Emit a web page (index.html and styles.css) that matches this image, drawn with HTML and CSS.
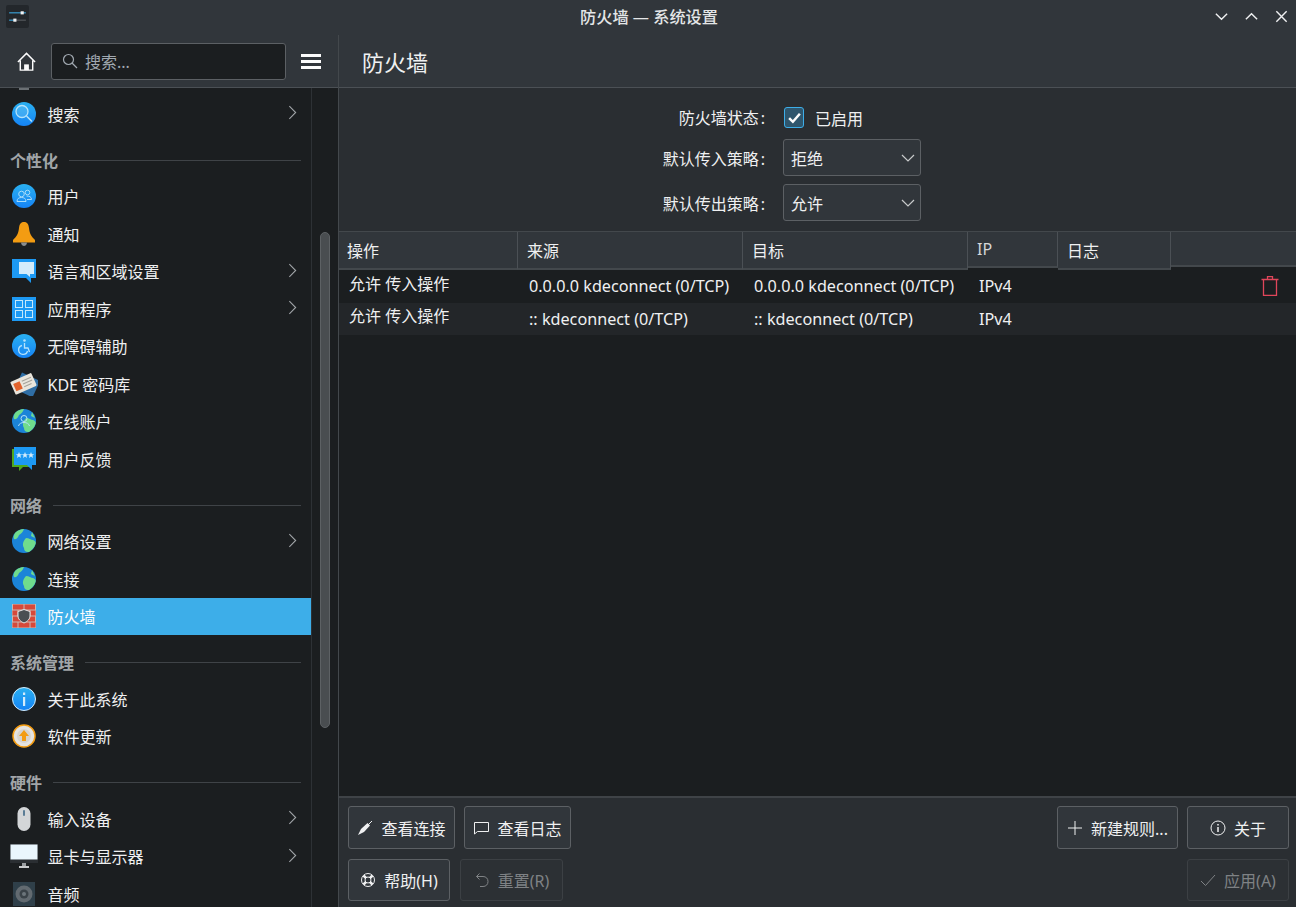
FILE: index.html
```html
<!DOCTYPE html>
<html lang="zh-CN">
<head>
  <meta charset="UTF-8">
  <title>防火墙 — 系统设置</title>
  <link rel="stylesheet" href="styles.css">
</head>

<body>
  <!-- Title bar -->
  <header class="titlebar">
    <svg class="app-icon" viewBox="0 0 22 22">
      <rect width="22" height="22" rx="2" fill="#23272b"/>
      <path d="M3 7.500H19" stroke="#3daee9"/>
      <path d="M3 14.500H8" stroke="#3daee9"/>
      <path d="M8 14.500H19" stroke="#5a5f64"/>
      <rect x="14" y="6" width="3" height="3" fill="#eff0f1"/>
      <rect x="7" y="13" width="3" height="3" fill="#eff0f1"/>
    </svg>
    <div class="window-title">防火墙 — 系统设置</div>
    <div class="window-buttons">
      <svg viewBox="0 0 16 16"><path d="M2 5L8 11L14 5"/></svg>
      <svg viewBox="0 0 16 16"><path d="M2 11L8 5L14 11"/></svg>
      <svg viewBox="0 0 16 16"><path d="M2.500 2.500L13.500 13.500M13.500 2.500L2.500 13.500"/></svg>
    </div>
  </header>

  <div class="main">
    <!-- Sidebar -->
    <aside class="sidebar">
      <div class="side-head">
        <svg class="home" viewBox="0 0 22 22">
          <path d="M2 11.500L11 2.500L20 11.500M4.500 10V20H17.500V10" fill="none" stroke="#fcfcfc" stroke-width="1.500"/>
          <rect x="8.500" y="14" width="5" height="6" fill="#fcfcfc"/>
        </svg>
        <div class="search">
          <svg viewBox="0 0 16 16"><circle cx="6.500" cy="6.500" r="5"/><path d="M10 10L15 15"/></svg>
          <span>搜索...</span>
        </div>
        <div class="burger"><i></i><i></i><i></i></div>
      </div>

      <div class="side-body">
        <nav class="list">
          <div class="cut-icon"></div>

          <div class="item">
            <svg class="icon" viewBox="0 0 24 24"><defs><linearGradient id="blue" x1="0" y1="0" x2="0" y2="1"><stop offset="0" stop-color="#2ab0f0"/><stop offset="1" stop-color="#1583f5"/></linearGradient></defs><circle cx="12" cy="12" r="12" fill="url(#blue)"/><circle cx="10" cy="9.500" r="6" fill="#7cc8f5" fill-opacity="0.35" stroke="#b5e3fb" stroke-width="1.300"/><path d="M14.500 14L20 19.500" stroke="#b5e3fb" stroke-width="1.500"/></svg>
            <span>搜索</span><svg class="chev" viewBox="0 0 10 16"><path d="M1.500 1L8.500 8L1.500 15"/></svg>
          </div>

          <div class="section"><span>个性化</span><hr></div>
          <div class="item">
            <svg class="icon" viewBox="0 0 24 24"><circle cx="12" cy="12" r="12" fill="url(#blue)"/><g fill="none" stroke="#a9dcf9"><circle cx="9.500" cy="10" r="2.800"/><circle cx="15.500" cy="8.500" r="2.300"/><path d="M5 17.500C5 14.500 7 13.500 9.500 13.500S14 14.500 14 17.500ZM14.500 12C17 12 19.500 12.500 19.500 15.500H15"/></g></svg>
            <span>用户</span>
          </div>
          <div class="item">
            <svg class="icon" viewBox="0 0 24 24"><path d="M12 0C15.500 0 16.500 2.500 17 6C17.500 12 20 15 23 18V20.500H1V18C4 15 6.500 12 7 6C7.500 2.500 8.500 0 12 0Z" fill="#f39c12"/><path d="M9 20.500H15C15 23 13 24 12 24S9 23 9 20.500Z" fill="#8a8d8f"/></svg>
            <span>通知</span>
          </div>
          <div class="item">
            <svg class="icon" viewBox="0 0 24 24"><path d="M0 0H24V19H19V24L14 19H0Z" fill="#1d99f3"/><path d="M7 3H22V15H18V18L14.500 15H7Z" fill="#d4ecfb"/></svg>
            <span>语言和区域设置</span><svg class="chev" viewBox="0 0 10 16"><path d="M1.500 1L8.500 8L1.500 15"/></svg>
          </div>
          <div class="item">
            <svg class="icon" viewBox="0 0 24 24"><rect width="24" height="24" fill="#1d99f3"/><g fill="none" stroke="#c5e8fb"><rect x="3.500" y="3.500" width="7" height="7"/><rect x="13.500" y="3.500" width="7" height="7"/><rect x="3.500" y="13.500" width="7" height="7"/><rect x="13.500" y="13.500" width="7" height="7"/></g></svg>
            <span>应用程序</span><svg class="chev" viewBox="0 0 10 16"><path d="M1.500 1L8.500 8L1.500 15"/></svg>
          </div>
          <div class="item">
            <svg class="icon" viewBox="0 0 24 24"><circle cx="12" cy="12" r="12" fill="url(#blue)"/><circle cx="12.500" cy="6.500" r="1.300" fill="#b5e3fb"/><path d="M12.500 9V14H16L17.500 18M10 11.500A4.500 4.500 0 1 0 15.500 17" fill="none" stroke="#b5e3fb" stroke-width="1.300"/></svg>
            <span>无障碍辅助</span>
          </div>
          <div class="item">
            <svg class="icon wide" viewBox="0 0 28 24"><g transform="rotate(25 15 13)"><rect x="7" y="3" width="20" height="18" fill="#2f6ea5"/></g><g transform="rotate(-24 13 12)"><rect x="2" y="5" width="23" height="14" rx="1" fill="#e9e5dc"/><rect x="4" y="8" width="7" height="8" fill="#e2632c"/><path d="M13 9H23M13 12H23M13 15H21" stroke="#a5a299"/></g></svg>
            <span>KDE 密码库</span>
          </div>
          <div class="item">
            <svg class="icon" viewBox="0 0 24 24"><use href="#globe-shape"/><circle cx="12" cy="9.500" r="3" fill="none" stroke="#b5e3fb"/><path d="M6.500 17C7 14.500 9.500 13.500 12 13.500S17 14.500 17.500 17" fill="none" stroke="#b5e3fb"/></svg>
            <span>在线账户</span>
          </div>
          <div class="item">
            <svg class="icon" viewBox="0 0 24 24"><path d="M0 2H20V20H11L7 24V20H0Z" fill="#4fa81d"/><path d="M2 0H24V18H20V23L15 18H2Z" fill="#1d99f3"/><g fill="#d4ecfb"><path id="star" d="M7 5L7.900 7.200H10.200L8.400 8.600L9 11L7 9.600L5 11L5.600 8.600L3.800 7.200H6.100Z"/><use href="#star" x="6"/><use href="#star" x="12"/></g></svg>
            <span>用户反馈</span>
          </div>

          <div class="section"><span>网络</span><hr></div>
          <div class="item">
            <svg class="icon" viewBox="0 0 24 24"><use href="#globe-shape"/></svg>
            <span>网络设置</span><svg class="chev" viewBox="0 0 10 16"><path d="M1.500 1L8.500 8L1.500 15"/></svg>
          </div>
          <div class="item">
            <svg class="icon" viewBox="0 0 24 24"><g id="globe-shape"><circle cx="12" cy="12" r="12" fill="#1b84d8"/><path d="M3 4C6 1 9 0 12 0C11 3 9 5 7 6C6 8 5 11 2 10C1 8 2 6 3 4ZM14 9C17 9 19 11 21 11C24 12 24 14 23.500 15C22 19 20 21 17 23C14 23.500 12 22 12 19C10 16 11 12 14 9ZM20 3L23 9L19 7Z" fill="#6fdc8c"/></g></svg>
            <span>连接</span>
          </div>
          <div class="item active">
            <svg class="icon" viewBox="0 0 24 24"><rect width="24" height="24" fill="#c9b8b2"/><g fill="#d6493a"><rect x="1" y="0.500" width="10.500" height="5"/><rect x="12.500" y="0.500" width="10.500" height="5"/><rect x="0.500" y="6.500" width="5" height="5"/><rect x="6.500" y="6.500" width="11" height="5"/><rect x="18.500" y="6.500" width="5" height="5"/><rect x="1" y="12.500" width="10.500" height="5"/><rect x="12.500" y="12.500" width="10.500" height="5"/><rect x="0.500" y="18.500" width="5" height="5"/><rect x="6.500" y="18.500" width="11" height="5"/><rect x="18.500" y="18.500" width="5" height="5"/></g><path d="M12 5.500L18 7.500V12C18 15 15.500 17.500 12 19C8.500 17.500 6 15 6 12V7.500Z" fill="#4a4e52" stroke="#e4e6e7"/></svg>
            <span>防火墙</span>
          </div>

          <div class="section"><span>系统管理</span><hr></div>
          <div class="item">
            <svg class="icon" viewBox="0 0 24 24"><circle cx="12" cy="12" r="11.500" fill="url(#blue)" stroke="#d4ecfb"/><rect x="11" y="10" width="2.200" height="9" fill="#d4ecfb"/><rect x="11" y="5.500" width="2.200" height="2.500" fill="#d4ecfb"/></svg>
            <span>关于此系统</span>
          </div>
          <div class="item">
            <svg class="icon" viewBox="0 0 24 24"><circle cx="12" cy="12" r="11" fill="#e5e3df" stroke="#f39c12" stroke-width="1.500"/><circle cx="12" cy="12" r="7" fill="#d7d4cf"/><path d="M12 6L17 12H14V17H10V12H7Z" fill="#f39c12"/></svg>
            <span>软件更新</span>
          </div>

          <div class="section"><span>硬件</span><hr></div>
          <div class="item">
            <svg class="icon" viewBox="0 0 24 24"><rect x="5.500" y="0" width="13" height="24" rx="6.500" fill="#d3d6d8"/><rect x="11" y="3" width="2" height="6" rx="1" fill="#5a7d96"/></svg>
            <span>输入设备</span><svg class="chev" viewBox="0 0 10 16"><path d="M1.500 1L8.500 8L1.500 15"/></svg>
          </div>
          <div class="item">
            <svg class="icon wide" viewBox="0 0 28 24"><rect width="28" height="19" fill="#2a2e32"/><rect x="0.500" y="0.500" width="27" height="15" fill="#eaf6fd"/><rect x="12" y="19" width="4" height="3" fill="#9a9da0"/><rect x="9" y="22" width="10" height="2" fill="#c9cbcd"/></svg>
            <span>显卡与显示器</span><svg class="chev" viewBox="0 0 10 16"><path d="M1.500 1L8.500 8L1.500 15"/></svg>
          </div>
          <div class="item">
            <svg class="icon" viewBox="0 0 24 24"><rect x="1" width="22" height="24" fill="#2f3f49"/><circle cx="12" cy="12" r="8.500" fill="#626a70"/><circle cx="12" cy="12" r="4.500" fill="#3a4248"/><circle cx="12" cy="12" r="2" fill="#6c757b"/></svg>
            <span>音频</span>
          </div>
        </nav>

        <div class="scrollbar"><div class="thumb"></div></div>
      </div>
    </aside>

    <!-- Firewall page -->
    <section class="page">
      <div class="page-head">防火墙</div>

      <div class="form">
        <label class="top">防火墙状态<b>:</b></label>
        <div class="check-row">
          <span class="checkbox"><svg viewBox="0 0 14 14"><path d="M2 7.500L5.500 11L12 3.500"/></svg></span>
          <span>已启用</span>
        </div>
        <label>默认传入策略<b>:</b></label>
        <div class="combo"><span>拒绝</span><svg viewBox="0 0 14 8"><path d="M1 1L7 7L13 1"/></svg></div>
        <label>默认传出策略<b>:</b></label>
        <div class="combo"><span>允许</span><svg viewBox="0 0 14 8"><path d="M1 1L7 7L13 1"/></svg></div>
      </div>

      <div class="table">
        <div class="thead">
          <div class="th c1">操作</div>
          <div class="th c2">来源</div>
          <div class="th c3">目标</div>
          <div class="th c4 short">IP</div>
          <div class="th c5">日志</div>
          <div class="th c6 shorter"></div>
        </div>
        <div class="row">
          <div class="c1 action">允许 传入操作</div>
          <div class="c2">0.0.0.0 kdeconnect (0/TCP)</div>
          <div class="c3">0.0.0.0 kdeconnect (0/TCP)</div>
          <div class="c4">IPv4</div>
          <div class="c5"></div>
          <div class="c6 trash-cell">
            <svg class="trash" viewBox="0 0 18 20"><path d="M0.500 3.500H17.500M6.500 3.500V0.500H11.500V3.500M2.500 3.500V19.500H15.500V3.500" fill="none" stroke="#e0465a" stroke-width="1.300"/></svg>
          </div>
        </div>
        <div class="row alt">
          <div class="c1 action">允许 传入操作</div>
          <div class="c2">:: kdeconnect (0/TCP)</div>
          <div class="c3">:: kdeconnect (0/TCP)</div>
          <div class="c4">IPv4</div>
          <div class="c5"></div>
          <div class="c6"></div>
        </div>
      </div>

      <div class="footer">
        <div class="btn-row">
          <div class="btn w107">
            <svg viewBox="0 0 16 16"><path d="M1 15L4 9L10.500 3L13 5.500L7 12Z" fill="#eff0f1"/><path d="M11 5L15 1" stroke="#eff0f1"/></svg>
            查看连接
          </div>
          <div class="btn w107">
            <svg viewBox="0 0 16 16"><path d="M1.500 2.500H15.500V11.500H4.500L1.500 14Z" fill="none" stroke="#eff0f1"/></svg>
            查看日志
          </div>
          <div class="spacer"></div>
          <div class="btn w121">
            <svg viewBox="0 0 16 16"><path d="M8 1V15M1 8H15" stroke="#eff0f1"/></svg>
            新建规则...
          </div>
          <div class="btn w102">
            <svg viewBox="0 0 16 16"><circle cx="8" cy="8" r="7" fill="none" stroke="#eff0f1"/><path d="M8 7V12M8 4V5.500" stroke="#eff0f1" stroke-width="1.500"/></svg>
            关于
          </div>
        </div>
        <div class="btn-row">
          <div class="btn w102 help">
            <svg viewBox="0 0 16 16"><g fill="none" stroke="#eff0f1"><circle cx="8" cy="8" r="6.500"/><circle cx="8" cy="8" r="3"/><path d="M3.500 3.500L6 6M12.500 3.500L10 6M3.500 12.500L6 10M12.500 12.500L10 10" stroke-width="2.500"/></g></svg>
            <span>帮助(H)</span>
          </div>
          <div class="btn off w103">
            <svg viewBox="0 0 16 16"><path d="M5.500 1.500L2.500 4.500L5.500 7.500M2.500 4.500H9C12 4.500 14 6.500 14 9.500S12 14.500 9 14.500H6" fill="none" stroke="#7f8285"/></svg>
            <span>重置(R)</span>
          </div>
          <div class="spacer"></div>
          <div class="btn off w102">
            <svg viewBox="0 0 16 16"><path d="M1 9L5.500 13.500L15 3" fill="none" stroke="#7f8285"/></svg>
            <span>应用(A)</span>
          </div>
        </div>
      </div>
    </section>
  </div>
</body>
</html>
```

FILE: styles.css
```css
/* Basic reset */
* {
  margin: 0;
  padding: 0;
  box-sizing: border-box;
}

body {
  width: 1296px;
  height: 907px;
  overflow: hidden;
  display: flex;
  flex-direction: column;
  font-family: "Noto Sans", "Noto Sans CJK SC", sans-serif;
  font-size: 16px;
  color: #eff0f1;
  background-color: #2a2e32;
}

/* Title bar */
.titlebar {
  height: 35px;
  flex-shrink: 0;
  display: grid;
  grid-template-columns: 1fr auto 1fr;
  align-items: center;
  padding: 0 7px 3px 6px;
  background-color: #31363b;
}

.app-icon {
  width: 23px;
  height: 23px;
}

.window-title {
  margin-left: 3px;
  font-size: 16.200px;
  font-weight: 500;
  color: #e4e6e7;
}

.window-buttons {
  display: flex;
  justify-content: flex-end;
  gap: 15px;
}

.window-buttons svg {
  width: 15px;
  height: 15px;
  fill: none;
  stroke: #eff0f1;
  stroke-width: 1.500;
}

.main {
  flex: 1;
  display: flex;
  min-height: 0;
}

/* Sidebar */
.sidebar {
  width: 339px;
  flex-shrink: 0;
  display: flex;
  flex-direction: column;
  border-right: 1px solid #43484c;
  background-color: #1b1e20;
}

.side-head {
  height: 53px;
  flex-shrink: 0;
  display: flex;
  align-items: center;
  gap: 14px;
  padding: 0 16px;
  background-color: #31363b;
  border-bottom: 1px solid #4b5055;
}

.home {
  width: 21px;
  height: 21px;
}

.search {
  width: 235px;
  height: 37px;
  display: flex;
  align-items: center;
  gap: 7px;
  padding-left: 10px;
  background-color: #1b1e20;
  border: 1px solid #5c6064;
  border-radius: 3px;
  color: #a1a9b1;
}

.search svg {
  width: 16px;
  height: 16px;
  fill: none;
  stroke: #a1a9b1;
  stroke-width: 1.200;
}

.burger {
  width: 20px;
  margin-left: 1px;
  display: flex;
  flex-direction: column;
  gap: 3px;
}

.burger i {
  display: block;
  height: 3px;
  background-color: #fcfcfc;
}

.side-body {
  flex: 1;
  display: flex;
  min-height: 0;
  overflow: hidden;
}

.list {
  width: 311px;
  flex-shrink: 0;
  padding-top: 7px;
  position: relative;
}

/* bit of the item scrolled away above the list */
.cut-icon {
  position: absolute;
  top: 0;
  left: 19px;
  width: 10px;
  height: 2px;
  background-color: #6b7074;
}

.item {
  height: 37.500px;
  display: flex;
  align-items: center;
  padding: 0 14px 0 12px;
  color: #eff0f1;
}

.item span {
  flex: 1;
  margin-left: 11.500px;
}

.item.active {
  background-color: #3daee9;
  color: #fcfcfc;
}

.icon {
  width: 24px;
  height: 24px;
  flex-shrink: 0;
}

.icon.wide {
  width: 28px;
  margin: 0 -2px;
}

.chev {
  width: 9px;
  height: 15px;
  margin-bottom: 2px;
  flex-shrink: 0;
  fill: none;
  stroke: #a1a5a8;
  stroke-width: 1.200;
}

.section {
  height: 45px;
  display: flex;
  align-items: flex-end;
  gap: 10.500px;
  padding: 0 10px 6px 10px;
  font-weight: 700;
  color: #a1a5a8;
}

.section span {
  line-height: 22px;
}

.section hr {
  flex: 1;
  border: none;
  height: 1px;
  margin-bottom: 11px;
  background-color: #3f4347;
}

.scrollbar {
  flex: 1;
  border-left: 1px solid #2d3135;
  padding: 144px 0 0 8px;
}

.thumb {
  width: 10px;
  height: 496px;
  border-radius: 5px;
  background-color: #494d50;
  border: 1px solid #5d6164;
}

/* Firewall page */
.page {
  flex: 1;
  display: flex;
  flex-direction: column;
  min-width: 0;
}

.page-head {
  height: 53px;
  flex-shrink: 0;
  display: flex;
  align-items: center;
  padding-left: 23px;
  font-size: 22px;
  background-color: #31363b;
  border-bottom: 1px solid #4b5055;
}

.form {
  height: 143px;
  flex-shrink: 0;
  display: grid;
  grid-template-columns: 429px 1fr;
  grid-template-rows: 24px 37px 37px;
  row-gap: 8px;
  column-gap: 15px;
  align-items: center;
  align-content: start;
  padding-top: 19px;
}

.form > label {
  text-align: right;
  padding-right: 1px;
}

.form > label b {
  font-weight: 400;
  margin: 0 2px;
}

.form > label.top {
  align-self: start;
  line-height: 22px;
}

.check-row {
  align-self: start;
  height: 21px;
  display: flex;
  align-items: center;
  gap: 11px;
  padding-left: 1px;
}

.checkbox {
  width: 20px;
  height: 21px;
  display: flex;
  align-items: center;
  justify-content: center;
  background-color: #2f566d;
  border: 1px solid #3daee9;
  border-radius: 3px;
}

.checkbox svg {
  width: 15px;
  height: 15px;
  fill: none;
  stroke: #fcfcfc;
  stroke-width: 2.300;
}

.combo {
  width: 138px;
  height: 37px;
  display: flex;
  align-items: center;
  justify-content: space-between;
  padding: 0 5px 0 7px;
  background-color: #31363b;
  border: 1px solid #5c6064;
  border-radius: 3px;
}

.combo svg {
  width: 14px;
  height: 8px;
  fill: none;
  stroke: #c8cacb;
  stroke-width: 1.200;
}

/* Rule table */
.table {
  flex: 1;
  background-color: #1b1e20;
  border-top: 1px solid #43484c;
}

.thead {
  height: 38px;
  display: flex;
  align-items: flex-start;
  background-color: #1b1e20;
}

.th {
  height: 38px;
  display: flex;
  align-items: center;
  padding-left: 9px;
  background-color: #31363b;
  border-right: 1px solid #4b5055;
  border-bottom: 2px solid #43484c;
}

.th:first-child {
  padding-left: 8px;
}

.th.short {
  height: 36px;
  color: #d5d7d8;
}

.th.shorter {
  height: 35px;
  border-right: none;
}

.c1 { width: 179px; flex-shrink: 0; }
.c2 { width: 225px; flex-shrink: 0; }
.c3 { width: 225px; flex-shrink: 0; }
.c4 { width: 90px; flex-shrink: 0; }
.c5 { width: 113px; flex-shrink: 0; }
.c6 { flex: 1; }

.row {
  height: 32.500px;
  display: flex;
  align-items: center;
  font-size: 16.200px;
  line-height: 20px;
}

.row.alt {
  background-color: #232629;
}

.row .c1 { padding-left: 10px; }
.row .c2, .row .c3, .row .c4 { padding-left: 11px; }

.action {
  font-size: 16px;
  padding-bottom: 5px;
}

.trash-cell {
  display: flex;
  justify-content: flex-end;
  padding-right: 17px;
}

.trash {
  width: 18px;
  height: 20px;
}

/* Bottom buttons */
.footer {
  height: 111px;
  flex-shrink: 0;
  display: flex;
  flex-direction: column;
  gap: 10px;
  padding: 8px 7px 0 9px;
  border-top: 2px solid #3f4347;
}

.btn-row {
  display: flex;
  gap: 9px;
}

.spacer {
  flex: 1;
}

.btn {
  height: 43px;
  display: flex;
  align-items: center;
  justify-content: center;
  gap: 8px;
  background-color: #31363b;
  border: 1px solid #5c6064;
  border-radius: 3px;
  white-space: nowrap;
}

.btn-row + .btn-row .btn {
  height: 42px;
}

.btn svg {
  width: 16px;
  height: 16px;
  flex-shrink: 0;
}

.btn.off {
  background-color: #2c3034;
  border-color: #3c4044;
  color: #7f8285;
}

.w107 { width: 107px; }
.w121 { width: 121px; }
.w102 { width: 102px; }
.w103 { width: 103px; }

.help {
  margin-right: 1px;
}
```
